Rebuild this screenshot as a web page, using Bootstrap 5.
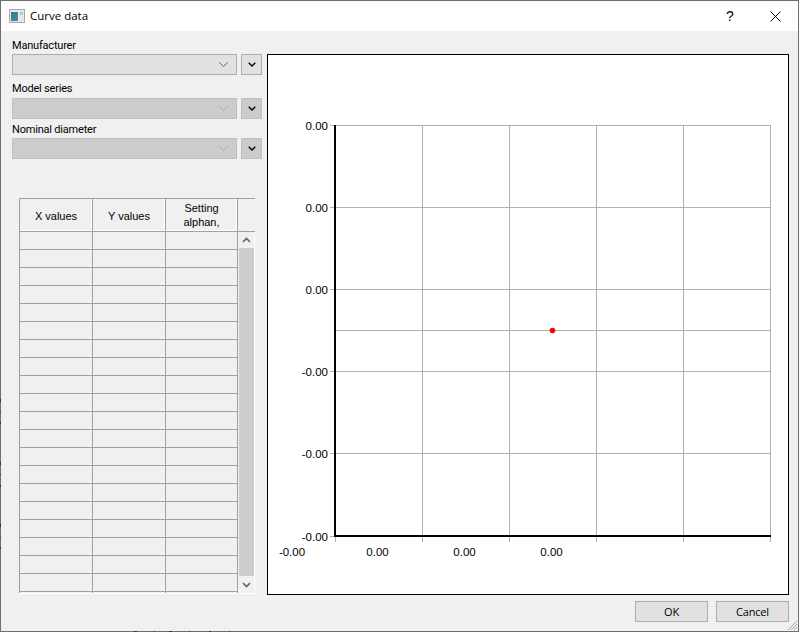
<!DOCTYPE html>
<html lang="en">
<head>
<meta charset="utf-8">
<title>Curve data</title>
<link href="https://cdn.jsdelivr.net/npm/bootstrap@5.3.0/dist/css/bootstrap.min.css" rel="stylesheet">
<style>
html,body{margin:0;height:632px;overflow:hidden;background:#f0f0f0}
body{font-family:Roboto,"Open Sans","Liberation Sans",sans-serif;font-size:11px;color:#000;line-height:16px}
.dlg{width:799px;height:632px;background:#f0f0f0;border:1px solid #6e6e6e;display:flex;flex-direction:column;position:relative}
.ttl{height:30px;background:#fff;flex:none;padding-left:8px}
.ttl-text{font-family:"Open Sans",sans-serif;font-size:11.5px;margin-left:5px}
.ttl-q{width:16px;text-align:center;font-size:14px;margin-right:32px;font-family:"Liberation Sans",sans-serif}
.ttl-x{margin-right:17px}
.mainrow{padding:7px 9px 0 11px;gap:5px;height:564px;flex:none}
.leftcol{width:250px;flex:none}
.lbl{height:16px;line-height:15px;white-space:nowrap;letter-spacing:-.2px}
.lbl-a{margin-top:6px}
.lbl-b{margin-top:3px}
.gap-a{margin-top:1px}
.combo{display:flex;gap:4px;height:21px}
.cbox{flex:1;background:#e1e1e1;border:1px solid #adadad;display:flex;align-items:center;justify-content:flex-end;padding-right:8px}
.cbtn{width:21px;background:#e1e1e1;border:1px solid #adadad;display:flex;align-items:center;justify-content:center}
.off .cbox,.off .cbtn{background:#cccccc;border-color:#bfbfbf}
.gridwrap{margin:39px 0 0 7px;width:236px;height:396px;border-bottom:1px solid #fff;display:flex;flex-direction:column;overflow:hidden;position:relative;font-family:"Liberation Sans",sans-serif}
.ghead{display:flex;height:34px;flex:none;border-top:1px solid #a0a0a0;border-bottom:1px solid #a0a0a0;border-left:1px solid #a0a0a0}
.hc{width:73px;border-right:1px solid #a0a0a0;display:flex;align-items:center;justify-content:center;text-align:center;font-size:11px;line-height:14px;flex:none;box-shadow:inset -1px -1px #fff;padding-top:1px}
.hc.last{width:72px;padding-top:0}
.gbody{flex:1;display:flex;overflow:hidden}
.rows{width:219px;flex:none;overflow:hidden}
.grow{display:flex;height:18px;border-bottom:1px solid #a0a0a0;border-left:1px solid #a0a0a0}
.gc{width:73px;border-right:1px solid #a0a0a0;flex:none}
.gc:last-child{width:72px}
.sbar{width:17px;flex:none;border-right:1px solid #fff;display:flex;flex-direction:column;background:#f0f0f0}
.sarrow{height:17px;display:flex;align-items:center;justify-content:center;flex:none}
.sarrow-up{height:16px}
.sthumb{flex:1;background:#cdcdcd;margin-left:1px}
.plotbox{width:522px;height:541px;background:#fff;border:1px solid #000;flex:none;margin-top:16px;position:relative}
.plotbox svg{display:block;position:absolute;left:-1px;top:-1px}
.plotbox text{font-family:"Liberation Sans",sans-serif;font-size:11.5px;fill:#000}
.foot{gap:8px;padding:0 9px 0 0;justify-content:flex-end;margin-top:6px}
.wbtn{width:73px;height:21px;background:#e1e1e1;border:1px solid #adadad;border-radius:0;padding:0;font-size:11px;letter-spacing:-.2px;line-height:19px;color:#000;font-family:"Open Sans",sans-serif}
.grip{position:absolute;right:0;bottom:0}
.edge-l{position:absolute;left:-1px;top:380px}
.edge-b{position:absolute;left:120px;bottom:-1px}
</style>
</head>
<body>
<div class="dlg">
  <div class="ttl d-flex align-items-center">
    <svg width="16" height="14" viewBox="0 0 16 14"><defs><linearGradient id="ig" x1="0" y1="0" x2="1" y2="1"><stop offset="0" stop-color="#2f7f6f"/><stop offset="1" stop-color="#4f86c8"/></linearGradient></defs><rect x=".5" y=".5" width="15" height="13" fill="#e8e8e8" stroke="#a8a8a8"/><rect x="2" y="3" width="7" height="9" fill="url(#ig)"/><rect x="11" y="3" width="3" height="3" fill="#a8d0c0"/></svg>
    <span class="ttl-text">Curve data</span>
    <span class="ttl-q ms-auto">?</span>
    <svg class="ttl-x" width="11" height="11" viewBox="0 0 11 11"><path d="M.5 .5l10 10M10.500 .5l-10 10" stroke="#000" fill="none"/></svg>
  </div>
  <div class="mainrow d-flex">
    <div class="leftcol">
      <div class="lbl">Manufacturer</div>
      <div class="combo"><div class="cbox"><svg width="9" height="5" viewBox="0 0 9 5"><path d="M.5 .5l4 4 4-4" fill="none" stroke="#606060"/></svg></div><div class="cbtn"><svg width="8" height="5" viewBox="0 0 8 5"><path d="M.7 .7L4 4l3.300-3.300" fill="none" stroke="#000" stroke-width="1.400"/></svg></div></div>
      <div class="lbl lbl-a">Model series</div>
      <div class="combo off gap-a"><div class="cbox"><svg width="9" height="5" viewBox="0 0 9 5"><path d="M.5 .5l4 4 4-4" fill="none" stroke="#a8a8a8"/></svg></div><div class="cbtn"><svg width="8" height="5" viewBox="0 0 8 5"><path d="M.7 .7L4 4l3.300-3.300" fill="none" stroke="#000" stroke-width="1.400"/></svg></div></div>
      <div class="lbl lbl-b">Nominal diameter</div>
      <div class="combo off"><div class="cbox"><svg width="9" height="5" viewBox="0 0 9 5"><path d="M.5 .5l4 4 4-4" fill="none" stroke="#a8a8a8"/></svg></div><div class="cbtn"><svg width="8" height="5" viewBox="0 0 8 5"><path d="M.7 .7L4 4l3.300-3.300" fill="none" stroke="#000" stroke-width="1.400"/></svg></div></div>
      <div class="gridwrap">
        <div class="ghead"><div class="hc">X values</div><div class="hc">Y values</div><div class="hc last">Setting<br>alphan,</div></div>
        <div class="gbody">
          <div class="rows" id="rows"></div>
          <div class="sbar">
            <div class="sarrow sarrow-up"><svg width="9" height="6" viewBox="0 0 9 6"><path d="M1 5l3.500-3.500L8 5" fill="none" stroke="#606060" stroke-width="1.600"/></svg></div>
            <div class="sthumb"></div>
            <div class="sarrow"><svg width="9" height="6" viewBox="0 0 9 6"><path d="M1 1l3.500 3.500L8 1" fill="none" stroke="#606060" stroke-width="1.600"/></svg></div>
          </div>
        </div>
      </div>
    </div>
    <div class="plotbox">
      <svg id="plot" width="522" height="541" viewBox="267 54 522 541" shape-rendering="crispEdges"></svg>
    </div>
  </div>
  <div class="foot d-flex">
    <button type="button" class="btn wbtn">OK</button>
    <button type="button" class="btn wbtn">Cancel</button>
  </div>
  <svg class="grip" width="12" height="12" viewBox="0 0 12 12"><path d="M11 2L2 11M11 5L5 11M11 8L8 11" stroke="#a8a8a8" fill="none"/></svg>
  <svg class="edge-l" width="1" height="180" viewBox="0 0 1 180" shape-rendering="crispEdges"><path d="M0 18h1v3H0zM0 31h1v1H0zM0 41h1v2H0zM0 81h1v3H0zM0 93h1v1H0zM0 104h1v2H0zM0 143h1v3H0zM0 156h1v1H0zM0 166h1v2H0z" fill="#333"/></svg>
  <svg class="edge-b" width="110" height="1" viewBox="0 0 110 1" shape-rendering="crispEdges"><path d="M13 0h3v1h-3zM33 0h1v1h-1zM48 0h3v1h-3zM68 0h1v1h-1zM88 0h2v1h-2zM108 0h1v1h-1z" fill="#333"/></svg>
</div>
<script>
var r=document.getElementById('rows'),h='';
for(var i=0;i<21;i++){h+='<div class="grow"><div class="gc"></div><div class="gc"></div><div class="gc"></div></div>';}
r.innerHTML=h;
var s='',G='#b0b0b0';
function L(a,b,c,d,col,w){s+='<line x1="'+a+'" y1="'+b+'" x2="'+c+'" y2="'+d+'" stroke="'+col+'" stroke-width="'+(w||1)+'"/>';}
[125,207,289,330,371,453].forEach(function(y){L(y==330?335:330,y+.5,771,y+.5,G);});
L(330,536.5,335,536.5,G);
[422,509,596,683,770].forEach(function(x){L(x+.5,125,x+.5,542,G);});
L(335.5,536,335.5,542,G);
L(335,125,335,537,'#000',2);
L(335,536,771,536,'#000',2);
function T(x,y,t,a){s+='<text x="'+x+'" y="'+y+'" text-anchor="'+a+'" shape-rendering="auto">'+t+'</text>';}
[[130,'0.00'],[212,'0.00'],[294,'0.00'],[376,'-0.00'],[458,'-0.00'],[541,'-0.00']].forEach(function(p){T(328,p[0],p[1],'end');});
[[292,'-0.00'],[377.5,'0.00'],[464.5,'0.00'],[551.5,'0.00']].forEach(function(p){T(p[0],556,p[1],'middle');});
s+='<circle cx="552.500" cy="330.500" r="2.800" fill="#f00" shape-rendering="auto"/>';
document.getElementById('plot').innerHTML=s;
</script>
<script src="https://cdn.jsdelivr.net/npm/bootstrap@5.3.0/dist/js/bootstrap.bundle.min.js"></script>
</body>
</html>
